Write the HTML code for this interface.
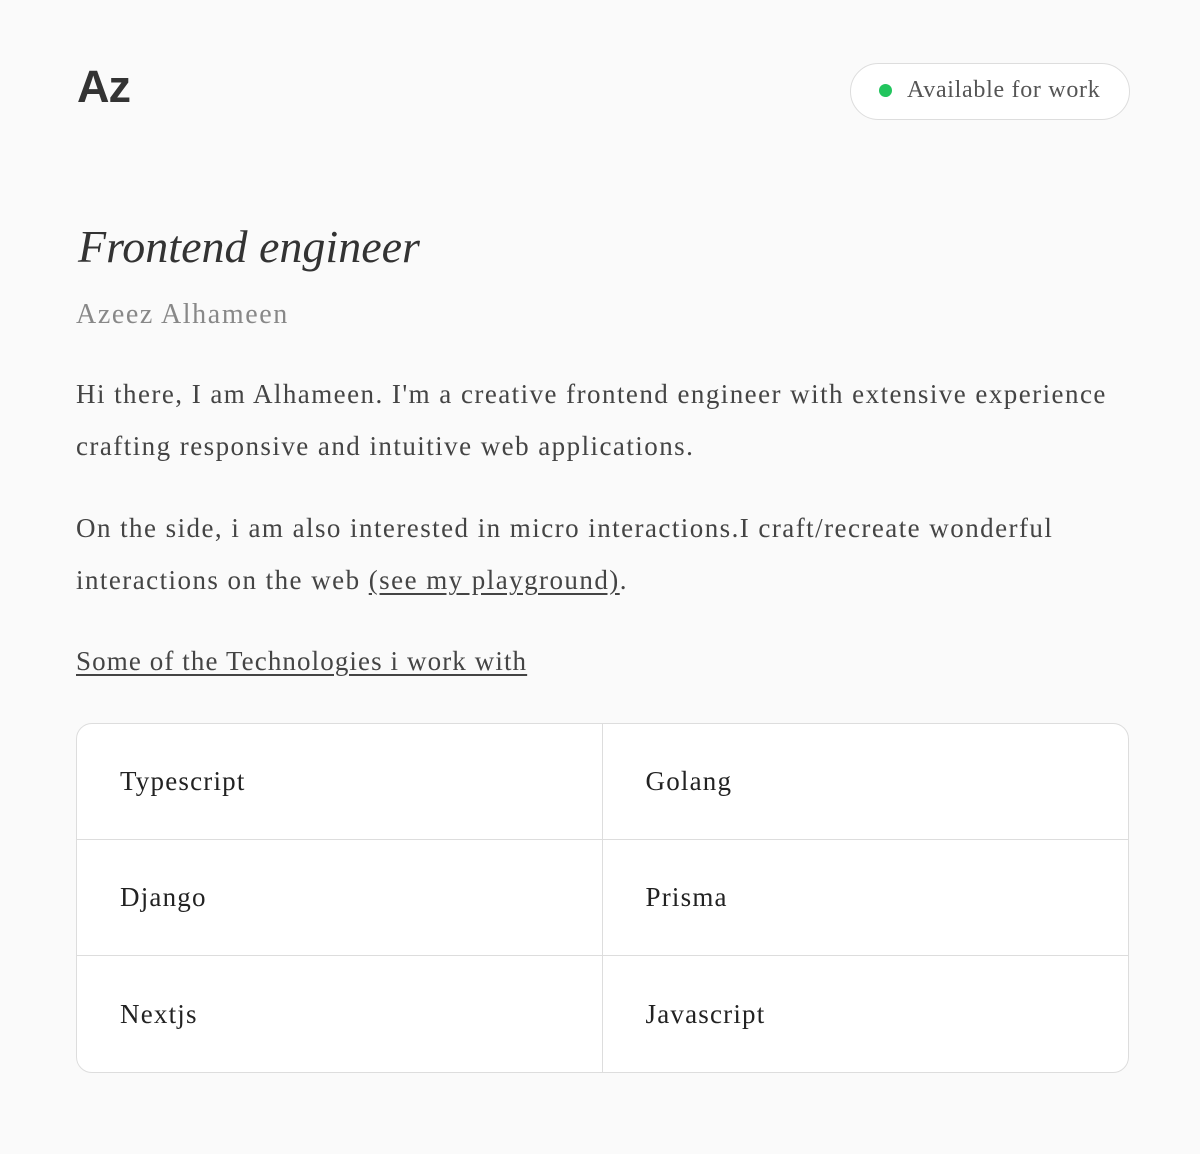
<!DOCTYPE html>
<html><head><meta charset="utf-8"><style>
body{margin:0;background:#fafafa;font-family:"Liberation Serif",serif;color:#3a3a3a;width:1200px;height:1154px;position:relative;overflow:hidden}
.logo{position:absolute;left:77px;top:61px;font-family:"Liberation Sans",sans-serif;font-weight:bold;font-size:45px;color:#333;letter-spacing:-1px}
.pill{position:absolute;left:850px;top:63px;width:280px;height:57px;border:1px solid #ddd;border-radius:29px;background:#fff;box-sizing:border-box;font-size:24px;color:#555;line-height:53px;letter-spacing:0.7px}
.pill .dot{position:absolute;left:28px;top:20px;width:13px;height:13px;border-radius:50%;background:#22c55e}
.pill span{position:absolute;left:56px}
h1{position:absolute;left:78px;top:220px;margin:0;font-style:italic;font-weight:normal;font-size:46px;color:#333}
.name{position:absolute;left:76px;top:299px;font-size:28px;color:#888;letter-spacing:1.6px}
p{position:absolute;left:76px;margin:0;font-size:27px;line-height:52px;width:1070px;color:#444;letter-spacing:1.45px}
a{color:#444;text-decoration:underline;text-underline-offset:4px}
.tech{position:absolute;left:76px;top:646px;font-size:27px;letter-spacing:1.1px}
table{position:absolute;left:76px;top:723px;width:1053px;height:350px;border-collapse:separate;border-spacing:0;border:1px solid #ddd;border-radius:16px;background:#fff}
td{width:50%;height:115px;padding:0 0 0 43px;font-size:27px;color:#222;border-bottom:1px solid #ddd;letter-spacing:1.2px;box-sizing:border-box}
td:first-child{border-right:1px solid #ddd}
tr:last-child td{border-bottom:none}
</style></head><body>
<div class="logo">Az</div>
<div class="pill"><div class="dot"></div><span>Available for work</span></div>
<h1>Frontend engineer</h1>
<div class="name">Azeez Alhameen</div>
<p style="top:368px">Hi there, I am Alhameen. I'm a creative frontend engineer with extensive experience crafting responsive and intuitive web applications.</p>
<p style="top:502px">On the side, i am also interested in micro interactions.I craft/recreate wonderful interactions on the web <a>(see my playground)</a>.</p>
<a class="tech">Some of the Technologies i work with</a>
<table>
<tr><td>Typescript</td><td>Golang</td></tr>
<tr><td>Django</td><td>Prisma</td></tr>
<tr><td>Nextjs</td><td>Javascript</td></tr>
</table>
</body></html>
